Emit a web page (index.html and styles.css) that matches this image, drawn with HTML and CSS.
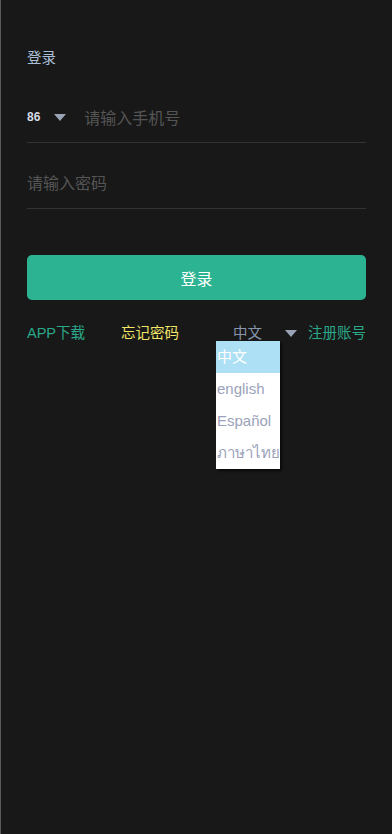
FILE: index.html
```html
<!DOCTYPE html>
<html lang="zh-CN">
<head>
<meta charset="utf-8">
<meta name="viewport" content="width=device-width, initial-scale=1">
<title>登录</title>
<link rel="stylesheet" href="styles.css">
</head>
<body>
<div class="page">
  <div class="title">登录</div>
  <div class="field field-phone">
    <span class="code">86</span>
    <span class="caret"></span>
    <span class="placeholder">请输入手机号</span>
  </div>
  <div class="field field-pass">
    <span class="placeholder">请输入密码</span>
  </div>
  <div class="btn">登录</div>
  <div class="links">
    <span class="link green">APP下载</span>
    <span class="link yellow forgot">忘记密码</span>
    <div class="lang">
      <span class="lang-cur">中文</span>
      <span class="caret"></span>
      <ul class="menu">
        <li class="item active">中文</li>
        <li class="item">english</li>
        <li class="item">Español</li>
        <li class="item">ภาษาไทย</li>
      </ul>
    </div>
    <span class="link green register">注册账号</span>
  </div>
</div>
</body>
</html>
```

FILE: styles.css
```css
* { box-sizing: border-box; }
html, body { margin: 0; padding: 0; background: #181818; }
body {
  font-family: "Liberation Sans", "Noto Sans CJK SC", "Noto Sans", sans-serif;
}
.page {
  min-height: 834px;
  background: #181818;
  padding: 47px 26px 0 27px;
  box-shadow: inset 1px 0 0 #5a5a5a;
}
.title {
  font-size: 14.5px;
  line-height: 22px;
  color: #a9bfd6;
}
.field {
  display: flex;
  align-items: center;
  border-bottom: 1px solid #333;
}
.field-phone {
  margin-top: 23px;
  height: 51px;
}
.field-pass {
  height: 66px;
  padding-top: 13px;
}
.code {
  font-size: 12px;
  font-weight: bold;
  color: #d6dbe4;
}
.caret {
  width: 0;
  height: 0;
  border-left: 6.5px solid transparent;
  border-right: 6.5px solid transparent;
  border-top: 7px solid #9aa3b6;
}
.field-phone .caret { margin-left: 14px; }
.placeholder {
  font-size: 16px;
  color: #555;
}
.field-phone .placeholder { margin-left: 18px; }
.btn {
  margin-top: 46px;
  height: 45px;
  border-radius: 5px;
  background: #2cb492;
  color: #fff;
  font-size: 16px;
  display: flex;
  align-items: center;
  justify-content: center;
}
.links {
  margin-top: 22px;
  display: flex;
  align-items: center;
  line-height: 22px;
  font-size: 14.5px;
}
.green { color: #2aa88a; }
.yellow { color: #f3e567; }
.forgot { margin-left: 36px; }
.lang {
  margin-left: auto;
  display: flex;
  align-items: center;
  position: relative;
}
.lang-cur { color: #8796ad; }
.lang .caret { margin-left: 23px; }
.register { margin-left: 11px; }
.menu {
  position: absolute;
  left: -17px;
  top: 19px;
  width: 64px;
  margin: 0;
  padding: 0;
  list-style: none;
  background: #fff;
  box-shadow: 2px 2px 2px rgba(0,0,0,0.6);
  z-index: 2;
}
.item {
  height: 32px;
  line-height: 32px;
  font-size: 15px;
  color: #9aa2ba;
  white-space: nowrap;
  overflow: hidden;
  padding-left: 1px;
}
.item.active {
  background: #ade0f4;
  color: #fff;
}
```
